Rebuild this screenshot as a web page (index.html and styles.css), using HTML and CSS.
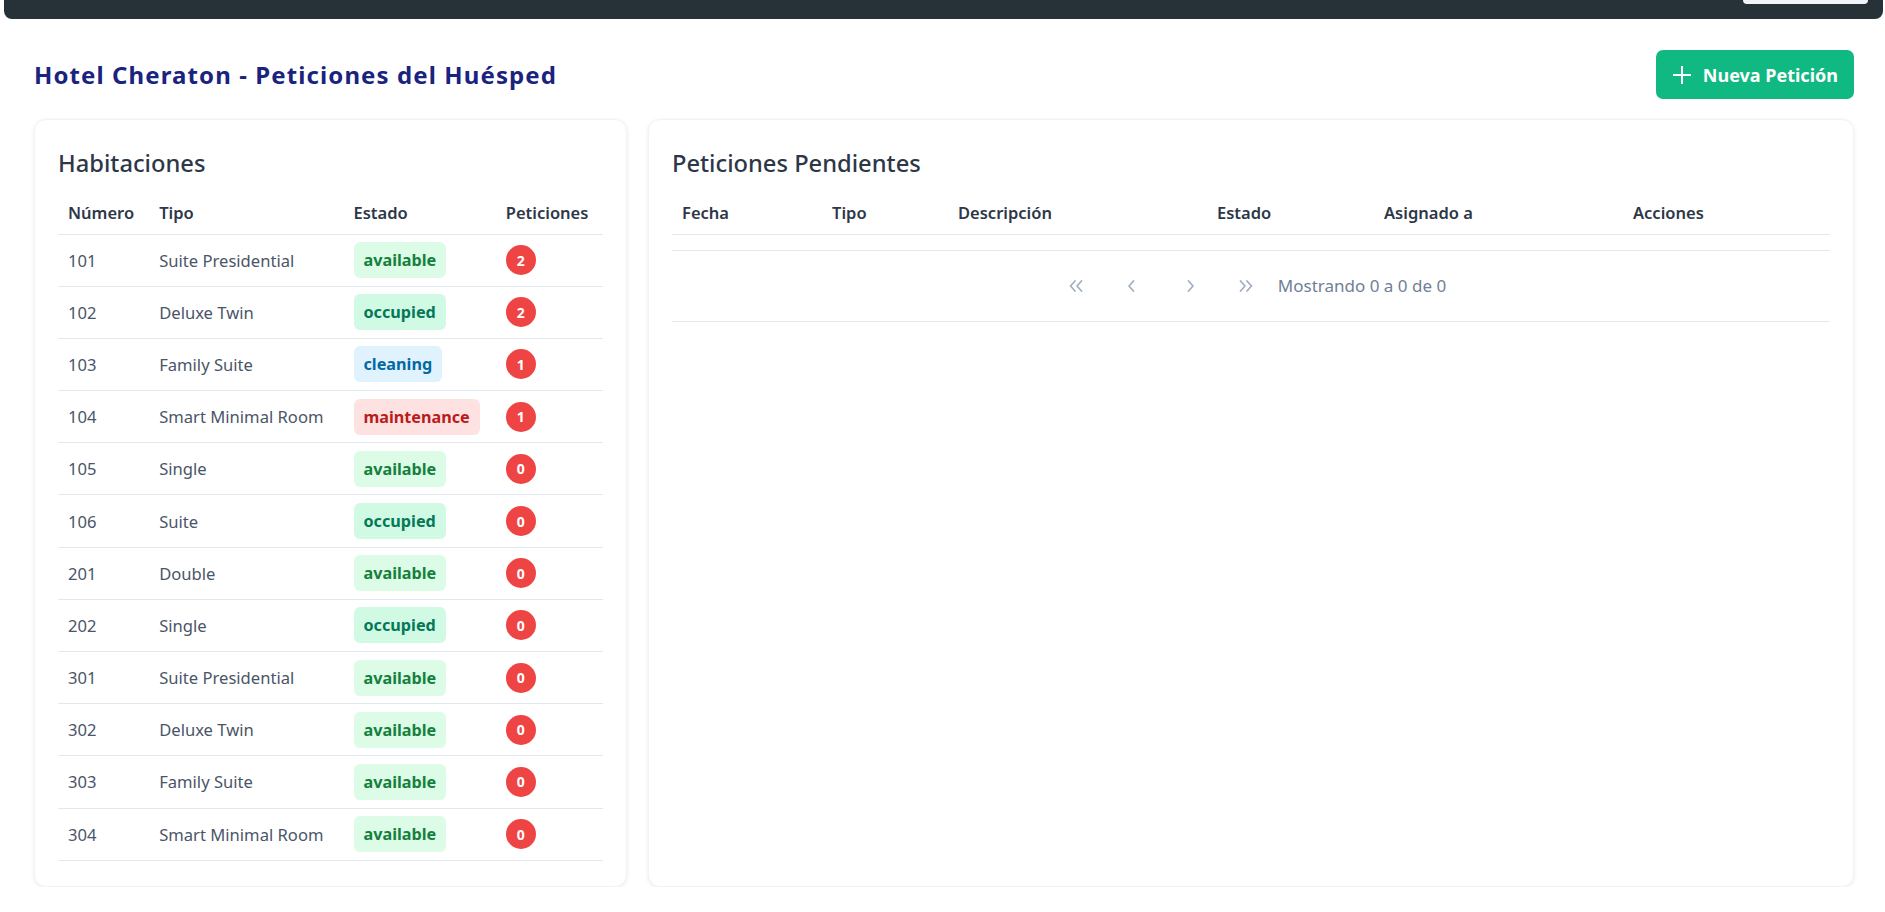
FILE: index.html
```html
<!DOCTYPE html>
<html lang="es">
<head>
<meta charset="utf-8">
<title>Hotel Cheraton - Peticiones del Huésped</title>
<link rel="stylesheet" href="styles.css">
</head>
<body>
<div class="topbar">
  <div class="topbar-btn"></div>
</div>

<header class="page-header">
  <h1 class="page-title">Hotel Cheraton - Peticiones del Huésped</h1>
  <button class="btn-new">
    <svg class="btn-icon" width="20" height="20" viewBox="0 0 20 20"><path d="M10 1v18M1 10h18" stroke="#fff" stroke-width="2" fill="none"/></svg>
    <span>Nueva Petición</span>
  </button>
</header>

<main class="layout">
  <section class="card card-rooms">
    <h2 class="card-title">Habitaciones</h2>
    <table class="tbl">
      <colgroup>
        <col class="c-num"><col class="c-tipo"><col class="c-estado"><col class="c-pet">
      </colgroup>
      <thead>
        <tr><th>Número</th><th>Tipo</th><th>Estado</th><th>Peticiones</th></tr>
      </thead>
      <tbody>
        <tr><td>101</td><td>Suite Presidential</td><td><span class="badge b-available">available</span></td><td><span class="count">2</span></td></tr>
        <tr><td>102</td><td>Deluxe Twin</td><td><span class="badge b-occupied">occupied</span></td><td><span class="count">2</span></td></tr>
        <tr><td>103</td><td>Family Suite</td><td><span class="badge b-cleaning">cleaning</span></td><td><span class="count">1</span></td></tr>
        <tr><td>104</td><td>Smart Minimal Room</td><td><span class="badge b-maintenance">maintenance</span></td><td><span class="count">1</span></td></tr>
        <tr><td>105</td><td>Single</td><td><span class="badge b-available">available</span></td><td><span class="count">0</span></td></tr>
        <tr><td>106</td><td>Suite</td><td><span class="badge b-occupied">occupied</span></td><td><span class="count">0</span></td></tr>
        <tr><td>201</td><td>Double</td><td><span class="badge b-available">available</span></td><td><span class="count">0</span></td></tr>
        <tr><td>202</td><td>Single</td><td><span class="badge b-occupied">occupied</span></td><td><span class="count">0</span></td></tr>
        <tr><td>301</td><td>Suite Presidential</td><td><span class="badge b-available">available</span></td><td><span class="count">0</span></td></tr>
        <tr><td>302</td><td>Deluxe Twin</td><td><span class="badge b-available">available</span></td><td><span class="count">0</span></td></tr>
        <tr><td>303</td><td>Family Suite</td><td><span class="badge b-available">available</span></td><td><span class="count">0</span></td></tr>
        <tr><td>304</td><td>Smart Minimal Room</td><td><span class="badge b-available">available</span></td><td><span class="count">0</span></td></tr>
      </tbody>
    </table>
  </section>

  <section class="card card-requests">
    <h2 class="card-title">Peticiones Pendientes</h2>
    <table class="tbl">
      <colgroup>
        <col class="r-fecha"><col class="r-tipo"><col class="r-desc"><col class="r-estado"><col class="r-asig"><col class="r-acc">
      </colgroup>
      <thead>
        <tr><th>Fecha</th><th>Tipo</th><th>Descripción</th><th>Estado</th><th>Asignado a</th><th>Acciones</th></tr>
      </thead>
      <tbody>
        <tr class="empty-row"><td colspan="6"></td></tr>
      </tbody>
    </table>
    <div class="pager">
      <button class="pg-btn" aria-label="Primera">
        <svg width="16" height="12" viewBox="0 0 16 12"><path d="M7 1L2.5 6L7 11M13.5 1L9 6L13.5 11" stroke="currentColor" stroke-width="1.7" fill="none" stroke-linecap="round" stroke-linejoin="round"/></svg>
      </button>
      <button class="pg-btn pg-prev" aria-label="Anterior">
        <svg width="8" height="12" viewBox="0 0 8 12"><path d="M6.5 1L2 6L6.5 11" stroke="currentColor" stroke-width="1.7" fill="none" stroke-linecap="round" stroke-linejoin="round"/></svg>
      </button>
      <button class="pg-btn pg-next" aria-label="Siguiente">
        <svg width="8" height="12" viewBox="0 0 8 12"><path d="M1.5 1L6 6L1.5 11" stroke="currentColor" stroke-width="1.7" fill="none" stroke-linecap="round" stroke-linejoin="round"/></svg>
      </button>
      <button class="pg-btn" aria-label="Última">
        <svg width="16" height="12" viewBox="0 0 16 12"><path d="M2.5 1L7 6L2.5 11M9 1L13.5 6L9 11" stroke="currentColor" stroke-width="1.7" fill="none" stroke-linecap="round" stroke-linejoin="round"/></svg>
      </button>
      <span class="pg-info">Mostrando 0 a 0 de 0</span>
    </div>
  </section>
</main>
</body>
</html>
```

FILE: styles.css
```css
* { box-sizing: border-box; }

html, body {
  margin: 0;
  padding: 0;
  background: #ffffff;
}

body {
  font-family: "Noto Sans", "Open Sans", sans-serif;
  color: #2d3748;
}

.topbar {
  height: 19px;
  margin: 0 2px 0 4px;
  background: #263238;
  border-radius: 0 0 8px 8px;
  display: flex;
  justify-content: flex-end;
  padding-right: 15px;
}

.topbar-btn {
  width: 125px;
  height: 4px;
  background: #f1f5f9;
  border-radius: 0 0 5px 5px;
}

.page-header {
  display: flex;
  justify-content: space-between;
  align-items: center;
  margin-top: 31px;
  padding: 0 31px 0 34px;
  height: 49px;
}

.page-title {
  margin: 0;
  font-size: 24px;
  font-weight: 700;
  letter-spacing: 1.1px;
  color: #1a237e;
}

.btn-new {
  display: flex;
  align-items: center;
  gap: 11px;
  height: 49px;
  padding: 0 16px;
  border: none;
  border-radius: 7px;
  background: #10b981;
  color: #fff;
  font-family: inherit;
  font-size: 18px;
  font-weight: 700;
  cursor: pointer;
}

.btn-icon { display: block; }

.layout {
  display: flex;
  gap: 21px;
  align-items: stretch;
  margin-top: 20px;
  padding: 0 31px 0 34px;
}

.card {
  background: #fff;
  border-radius: 12px;
  border: 1px solid #f1f3f5;
  box-shadow: 0 1px 4px rgba(0, 0, 0, 0.08);
  padding: 25px 23px 25px 23px;
}

.card-rooms { width: 593px; flex: none; }
.card-requests { flex: 1; }

.card-title {
  margin: 0 0 10px;
  font-size: 23.7px;
  font-weight: 500;
  line-height: 36px;
  color: #2d3748;
}

.tbl {
  width: 100%;
  border-collapse: collapse;
  table-layout: fixed;
}

.tbl th {
  text-align: left;
  font-size: 16.5px;
  font-weight: 600;
  color: #2d3748;
  padding: 0 10px;
  height: 43px;
  border-bottom: 1px solid #e2e8f0;
  white-space: nowrap;
}

.tbl td {
  font-size: 16.6px;
  color: #4a5568;
  padding: 0 10px;
  height: 52.2px;
  border-bottom: 1px solid #e2e8f0;
  white-space: nowrap;
}

.c-num { width: 91px; }
.c-tipo { width: 194px; }
.c-estado { width: 152px; }
.c-pet { width: 107px; }

.r-fecha { width: 150px; }
.r-tipo { width: 126px; }
.r-desc { width: 259px; }
.r-estado { width: 167px; }
.r-asig { width: 249px; }
.r-acc { width: 207px; }

.tbl .empty-row td { height: 16px; padding: 0; }

.badge {
  display: inline-block;
  height: 36px;
  line-height: 36px;
  padding: 0 10px;
  border-radius: 6px;
  font-size: 16.2px;
  font-weight: 700;
}

.b-available { background: #dcfce7; color: #15803d; }
.b-occupied { background: #d1fae5; color: #047857; }
.b-cleaning { background: #e0f2fe; color: #0369a1; }
.b-maintenance { background: #fee2e2; color: #b91c1c; }

.count {
  display: inline-flex;
  align-items: center;
  justify-content: center;
  width: 30px;
  height: 30px;
  border-radius: 50%;
  background: #ef4444;
  color: #fff;
  font-size: 14px;
  font-weight: 700;
}

.pager {
  display: flex;
  justify-content: center;
  align-items: center;
  gap: 15px;
  height: 71px;
  border-bottom: 1px solid #e2e8f0;
}

.pg-btn {
  width: 40px;
  height: 32px;
  display: flex;
  align-items: center;
  justify-content: center;
  border: none;
  background: transparent;
  color: #a0aec0;
  padding: 0;
  cursor: pointer;
}

.pg-next { margin-left: 5px; }

.pg-info {
  margin-left: -3px;
  font-size: 17px;
  color: #718096;
}
```
